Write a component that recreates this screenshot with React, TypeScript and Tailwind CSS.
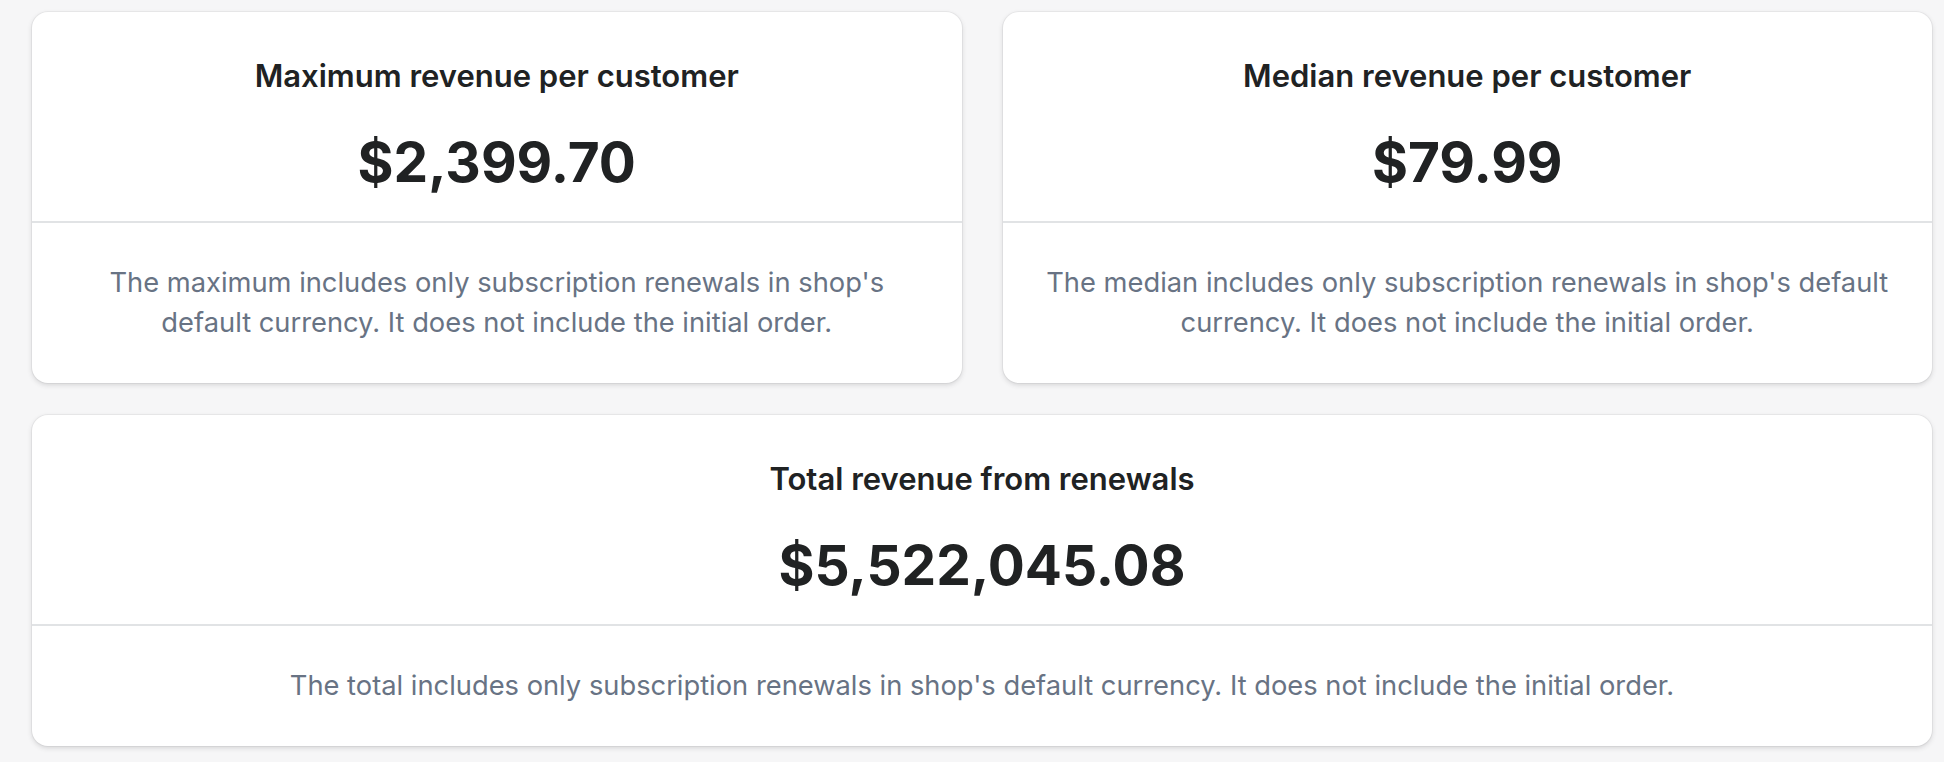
import React from 'react';

interface StatCardProps {
  title: string;
  amount: string;
  note: string;
}

const StatCard: React.FC<StatCardProps> = ({ title, amount, note }) => (
  <div className="bg-white rounded-[16px] shadow-[0_0_0_1px_rgba(63,63,68,0.05),0_2px_5px_0_rgba(63,63,68,0.18)] overflow-hidden">
    <div className="pt-[44px] pb-[27px] px-10 text-center">
      <h2 className="text-[31px] leading-[40px] font-semibold text-[#202223]">{title}</h2>
      <p className="mt-[34px] text-[55px] leading-[64px] font-bold text-[#202223]">{amount}</p>
    </div>
    <div className="border-t-2 border-[#e1e3e5] py-10 px-10 text-center">
      <p className="text-[27.3px] leading-[40px] text-[#687384]">{note}</p>
    </div>
  </div>
);

export default function App() {
  return (
    <div
      className="min-h-screen bg-[#f6f6f7] pl-8 pr-3 pt-3 pb-5"
      style={{ fontFamily: 'Inter, "Noto Sans", "Liberation Sans", sans-serif' }}
    >
      <div className="grid grid-cols-2 gap-x-[41px]">
        <StatCard
          title="Maximum revenue per customer"
          amount="$2,399.70"
          note="The maximum includes only subscription renewals in shop's default currency. It does not include the initial order."
        />
        <StatCard
          title="Median revenue per customer"
          amount="$79.99"
          note="The median includes only subscription renewals in shop's default currency. It does not include the initial order."
        />
      </div>
      <div className="mt-8">
        <StatCard
          title="Total revenue from renewals"
          amount="$5,522,045.08"
          note="The total includes only subscription renewals in shop's default currency. It does not include the initial order."
        />
      </div>
    </div>
  );
}
